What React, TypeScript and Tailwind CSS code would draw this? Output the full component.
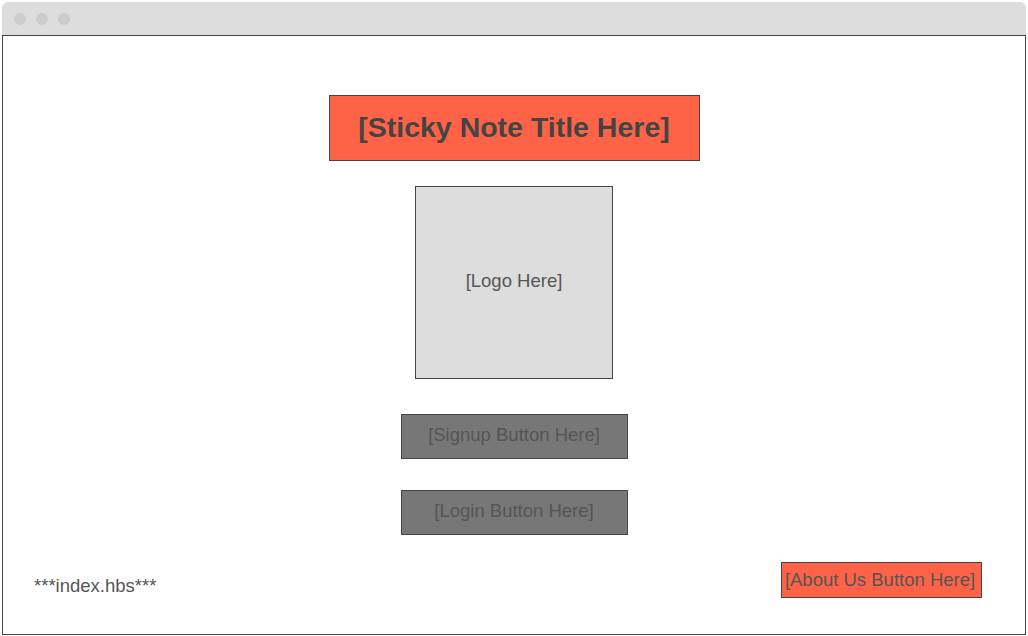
export default function App() {
  return (
    <div className="h-[636px] w-[1028px] bg-white p-[2px] pb-px font-['Liberation_Sans',Arial,sans-serif] text-[#444]">
      <div className="flex h-full flex-col">
        {/* window bar */}
        <div className="flex h-[33px] shrink-0 items-center gap-[10px] rounded-t-[6px] bg-[#dddddd] pl-[12px]">
          <span className="h-[12px] w-[12px] rounded-full bg-[#cccccc]" />
          <span className="h-[12px] w-[12px] rounded-full bg-[#cccccc]" />
          <span className="h-[12px] w-[12px] rounded-full bg-[#cccccc]" />
        </div>

        <div className="flex flex-1 flex-col items-center border border-[#444] pt-[59px]">
          <div className="flex h-[66px] w-[371px] items-center justify-center border border-[#444] bg-[#ff6347] pb-[2px] text-[28.5px] font-bold">
            [Sticky Note Title Here]
          </div>

          <div className="mt-[25px] flex h-[193px] w-[198px] items-center justify-center border border-[#444] bg-[#dddddd] pb-[4px] text-[18.5px] text-[#555]">
            [Logo Here]
          </div>

          <div className="mt-[35px] flex h-[45px] w-[227px] items-center justify-center border border-[#444] bg-[#777777] pb-[4px] text-[18.5px] text-[#555]">
            [Signup Button Here]
          </div>

          <div className="mt-[31px] flex h-[45px] w-[227px] items-center justify-center border border-[#444] bg-[#777777] pb-[4px] text-[18.5px] text-[#555]">
            [Login Button Here]
          </div>

          <div className="mt-[27px] flex w-full items-start justify-between pl-[31px] pr-[43px]">
            <span className="mt-[10px] text-[18.5px] text-[#555]">***index.hbs***</span>
            <div className="flex h-[36px] w-[201px] items-center justify-center border border-[#444] bg-[#ff6347] pr-[3px] text-[18.5px] text-[#555]">
              [About Us Button Here]
            </div>
          </div>
        </div>
      </div>
    </div>
  );
}
